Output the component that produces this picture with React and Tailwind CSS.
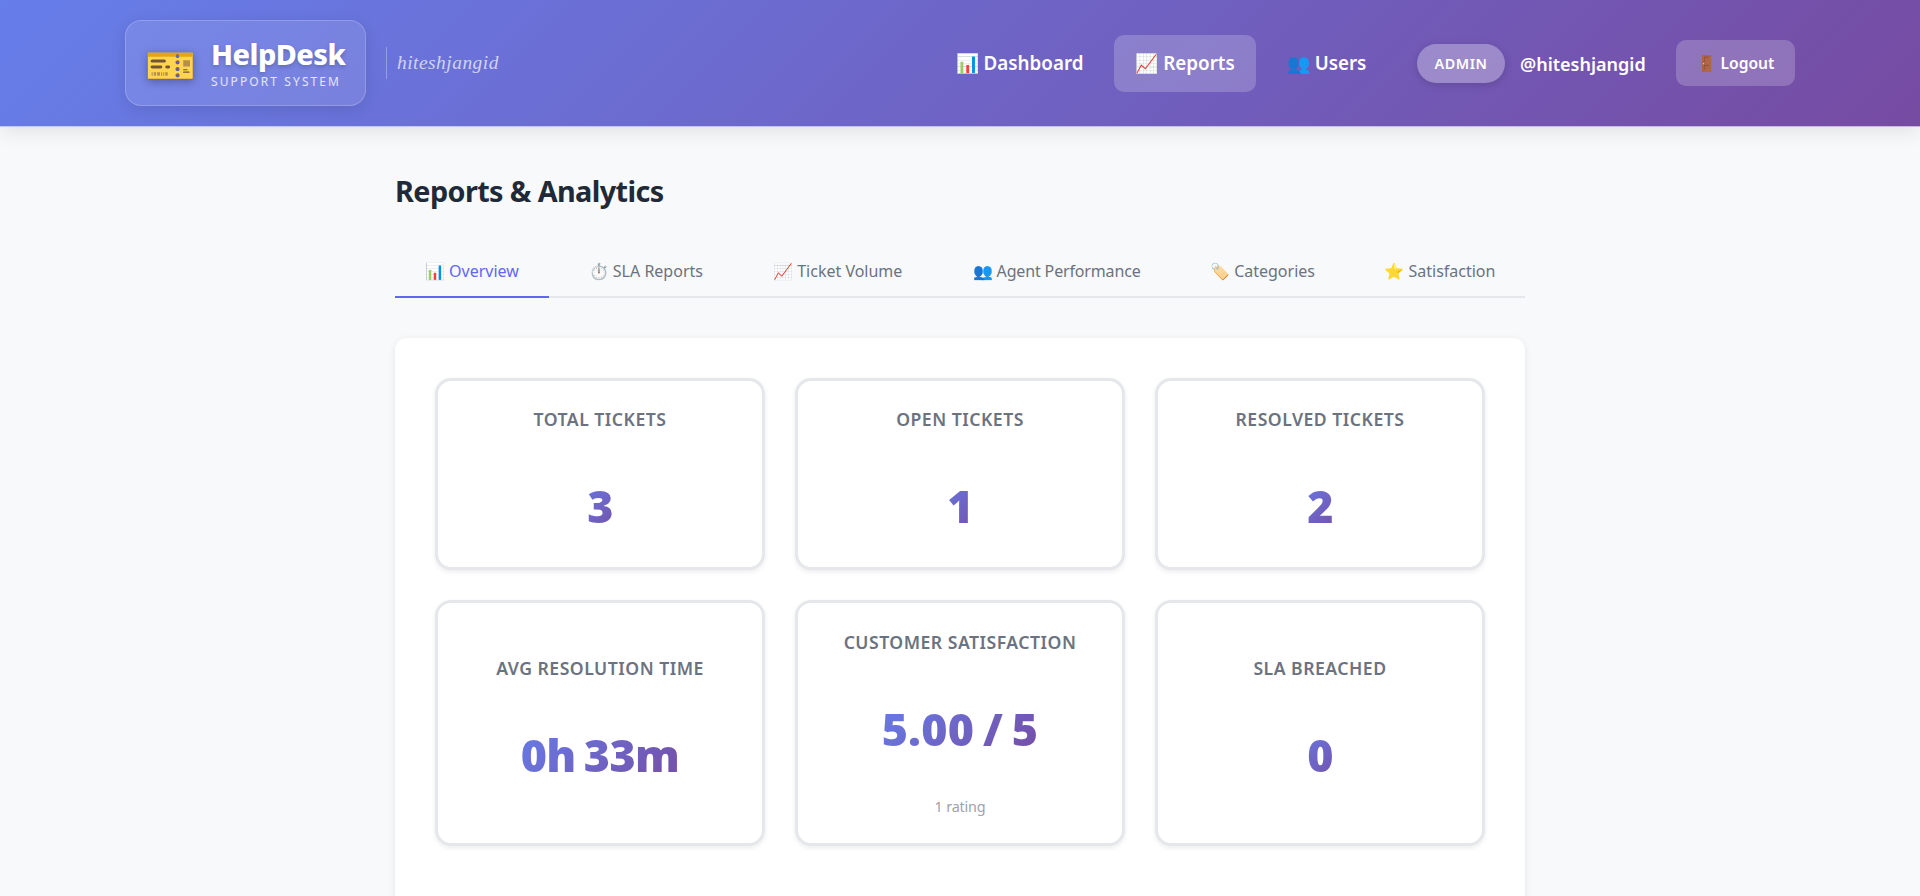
const NAV = [
  { icon: '📊', label: 'Dashboard', box: 'w-[169px]' },
  { icon: '📈', label: 'Reports', box: 'w-[142px] bg-white/20' },
  { icon: '👥', label: 'Users', box: 'w-[121px]' },
];

const TABS = [
  { icon: '📊', label: 'Overview', box: 'w-[154px] border-[#6366f1] text-[#6366f1]' },
  { icon: '⏱️', label: 'SLA Reports', box: 'w-[173px] border-transparent' },
  { icon: '📈', label: 'Ticket Volume', box: 'w-[190px] border-transparent' },
  { icon: '👥', label: 'Agent Performance', box: 'w-[227px] border-transparent tracking-[-0.15px]' },
  { icon: '🏷️', label: 'Categories', box: 'w-[164px] border-transparent' },
  { icon: '⭐', label: 'Satisfaction', box: 'w-[170px] border-transparent' },
];

const STATS = [
  { title: 'TOTAL TICKETS', value: '3' },
  { title: 'OPEN TICKETS', value: '1' },
  { title: 'RESOLVED TICKETS', value: '2' },
  { title: 'AVG RESOLUTION TIME', value: '0h 33m' },
  { title: 'CUSTOMER SATISFACTION', value: '5.00 / 5', note: '1 rating' },
  { title: 'SLA BREACHED', value: '0' },
];

function Header() {
  return (
    <header className="relative flex h-[127px] items-center justify-between border-b border-white/60 bg-[linear-gradient(135deg,#667eea_0%,#764ba2_100%)] px-[125px] shadow-[0_4px_20px_rgba(0,0,0,0.1)]">
      <div className="flex items-center">
        <div className="flex h-[86px] w-[241px] items-center rounded-2xl border border-white/20 bg-white/10 pl-[19px] shadow-[0_4px_15px_rgba(0,0,0,0.1)]">
          <span className="mt-[2px] w-[51px] text-[41px] leading-none drop-shadow-[0_2px_4px_rgba(0,0,0,0.3)]">🎫</span>
          <div className="ml-[15px] mt-[4px] flex flex-col whitespace-nowrap text-white">
            <span className="text-[28.8px] font-extrabold leading-[30px] tracking-[-0.5px] [text-shadow:0_2px_4px_rgba(0,0,0,0.2)]">HelpDesk</span>
            <span className="mt-1 text-[12px] leading-[18px] tracking-[2.1px] text-white/80">SUPPORT SYSTEM</span>
          </div>
        </div>
        <div className="ml-5 flex h-8 items-center border-l border-white/30 pl-[10px] font-['Liberation_Serif',serif] text-[19.4px] italic tracking-[0.5px] text-white/70">
          hiteshjangid
        </div>
      </div>
      <div className="flex items-center">
        <nav className="flex gap-[10px]">
          {NAV.map((n) => (
            <a key={n.label} className={`flex h-[57px] items-center justify-center gap-[5px] whitespace-nowrap rounded-[10px] pt-px text-[18.8px] font-semibold text-white ${n.box}`}>
              <span>{n.icon}</span>
              <span>{n.label}</span>
            </a>
          ))}
        </nav>
        <span className="ml-[30px] flex h-[39px] w-[88px] items-center justify-center rounded-full bg-white/30 pt-px text-[14.4px] font-semibold tracking-[0.5px] text-white shadow-[0_2px_8px_rgba(0,0,0,0.15)]">ADMIN</span>
        <span className="ml-[15px] w-[127px] whitespace-nowrap pt-[2px] text-[18px] font-semibold text-white">@hiteshjangid</span>
        <button className="ml-[29px] flex h-[46px] w-[119px] items-center justify-center gap-[5px] rounded-[10px] bg-white/20 pt-[2px] text-[15.6px] font-semibold text-white">
          <span>🚪</span>
          <span>Logout</span>
        </button>
      </div>
    </header>
  );
}

function StatCard({ title, value, note }) {
  return (
    <div className={`flex flex-col items-center justify-center rounded-2xl border-[3px] border-[#e5e7eb] bg-white shadow-[0_2px_5px_rgba(0,0,0,0.08)] ${note ? '' : 'pt-[2px]'}`}>
      <h3 className="text-[17.6px] font-semibold leading-[27px] tracking-[0.5px] text-[#6b7280]">{title}</h3>
      <p className={`mt-[35px] bg-[linear-gradient(135deg,#667eea_0%,#764ba2_100%)] bg-clip-text text-[44.8px] font-black leading-[76px] text-transparent [word-spacing:-3px] ${note ? 'tracking-[0.2px]' : 'tracking-[-0.6px]'}`}>{value}</p>
      {note && <p className="mt-[28px] text-[14.4px] leading-[23px] tracking-[-0.2px] text-[#9ca3af]">{note}</p>}
    </div>
  );
}

export default function App() {
  return (
    <div className="h-[896px] overflow-hidden bg-[#f8f9fb] font-['Noto_Sans',sans-serif]">
      <Header />
      <main className="mx-auto w-[1130px] pt-[42px]">
        <h1 className="text-[28.8px] font-bold leading-[44px] tracking-[-0.6px] text-[#1f2937]">Reports &amp; Analytics</h1>
        <div className="mt-[32px] flex h-[53px] justify-between border-b-2 border-[#e5e7eb]">
          {TABS.map((t) => (
            <button key={t.label} className={`-mb-[2px] flex items-center justify-center gap-1 whitespace-nowrap border-b-2 text-[16px] text-[#6b7280] ${t.box}`}>
              <span>{t.icon}</span>
              <span>{t.label}</span>
            </button>
          ))}
        </div>
        <section className="mt-10 grid h-[700px] grid-cols-3 grid-rows-[192px_246px] gap-[30px] rounded-xl bg-white p-10 shadow-[0_2px_8px_rgba(0,0,0,0.08)]">
          {STATS.map((s) => (
            <StatCard key={s.title} {...s} />
          ))}
        </section>
      </main>
    </div>
  );
}
